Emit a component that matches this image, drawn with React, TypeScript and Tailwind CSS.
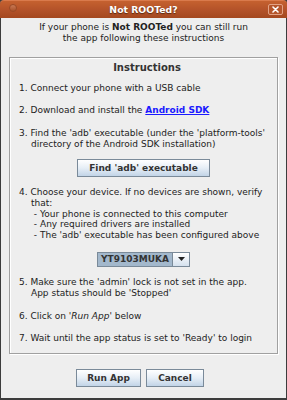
import React from "react";

const font = { fontFamily: '"DejaVu Sans", "Liberation Sans", sans-serif' };

function Btn({ children, className }: { children: React.ReactNode; className: string }) {
  return (
    <div
      className={
        "flex items-center justify-center border border-[#7a8a99] bg-gradient-to-b from-[#ffffff] via-[#e6eef6] to-[#c2d4e7] text-[9px] font-bold text-[#333333] leading-none " +
        className
      }
    >
      {children}
    </div>
  );
}

export default function App() {
  return (
    <div className="w-[287px] h-[400px] flex flex-col bg-[#3c3c3c]" style={font}>
      {/* Title bar */}
      <div className="h-[18px] flex items-center relative rounded-t-[4px] bg-gradient-to-b from-[#c5612f] via-[#b4532a] to-[#a4481f] border-t border-[#d97a4c] shrink-0">
        <div className="absolute left-[9px] top-[3px] w-[8px] h-[8px] rounded-full bg-gradient-to-b from-[#c97a55] to-[#a9522a] border border-[#9a4a26]" />
        <div className="flex-1 text-center text-white font-bold text-[9.3px] leading-none [text-shadow:0_1px_1px_#5a2a10]">
          Not ROOTed?
        </div>
        <div className="absolute right-[4px] top-[3px] w-[15px] h-[11px] rounded-[2px] border border-[#e2a285] bg-[#b5552b] flex items-center justify-center">
          <svg width="7" height="7" viewBox="0 0 7 7">
            <path d="M1 1L6 6M6 1L1 6" stroke="#ffffff" strokeWidth="1.6" strokeLinecap="round" />
          </svg>
        </div>
      </div>

      {/* Body */}
      <div className="flex-1 mx-[1px] mb-[2px] bg-[#eeeeee] flex flex-col text-[#222222] text-[9px] leading-[11px]">
        <div className="pt-[4px] text-center">
          <div>
            If your phone is <b>Not ROOTed</b> you can still run
          </div>
          <div>the app following these instructions</div>
        </div>

        {/* Panel */}
        <div className="mt-[13px] mx-[8px] h-[297px] border border-[#a0a0a0] shadow-[inset_1px_1px_0_#ffffff,1px_1px_0_#ffffff] flex flex-col pl-[9px] pr-[2px] whitespace-nowrap">
          <div className="pt-[3px] text-center font-bold text-[10px] leading-[13px] text-[#333333]">Instructions</div>

          <div className="mt-[9px]">1. Connect your phone with a USB cable</div>

          <div className="mt-[11px]">
            2. Download and install the{" "}
            <span className="font-bold text-[#1a1aff] underline">Android SDK</span>
          </div>

          <div className="mt-[12px] pl-[12px]">
            <div className="-ml-[12px]">3. Find the 'adb' executable (under the 'platform-tools'</div>
            <div>directory of the Android SDK installation)</div>
          </div>

          <div className="mt-[9px] flex justify-center pr-[7px]">
            <Btn className="w-[133px] h-[18px]">Find 'adb' executable</Btn>
          </div>

          <div className="mt-[10px] pl-[12px] leading-[10.8px]">
            <div className="-ml-[12px]">4. Choose your device. If no devices are shown, verify</div>
            <div>that:</div>
            <div>&nbsp;- Your phone is connected to this computer</div>
            <div>&nbsp;- Any required drivers are installed</div>
            <div>&nbsp;- The 'adb' executable has been configured above</div>
          </div>

          <div className="mt-[11px] flex justify-center pr-[7px]">
            <div className="w-[93px] h-[15px] flex border border-[#7a8a99]">
              <div className="flex-1 bg-[#a3b8cc] flex items-center pl-[3px] font-bold text-[9px] leading-none text-[#333333]">
                YT9103MUKA
              </div>
              <div className="w-[17px] border-l border-[#7a8a99] bg-gradient-to-b from-[#ffffff] to-[#d5e1ee] flex items-center justify-center">
                <svg width="7" height="4" viewBox="0 0 7 4">
                  <path d="M0 0H7L3.5 4Z" fill="#222222" />
                </svg>
              </div>
            </div>
          </div>

          <div className="mt-[10px] pl-[12px]">
            <div className="-ml-[12px]">5. Make sure the 'admin' lock is not set in the app.</div>
            <div>App status should be 'Stopped'</div>
          </div>

          <div className="mt-[12px]">
            6. Click on '<i>Run App</i>' below
          </div>

          <div className="mt-[11px]">7. Wait until the app status is set to 'Ready' to login</div>
        </div>

        {/* Buttons */}
        <div className="mt-[15px] flex justify-center gap-[5px] pr-[7px]">
          <Btn className="w-[65px] h-[18px]">Run App</Btn>
          <Btn className="w-[58px] h-[18px]">Cancel</Btn>
        </div>
      </div>
    </div>
  );
}
